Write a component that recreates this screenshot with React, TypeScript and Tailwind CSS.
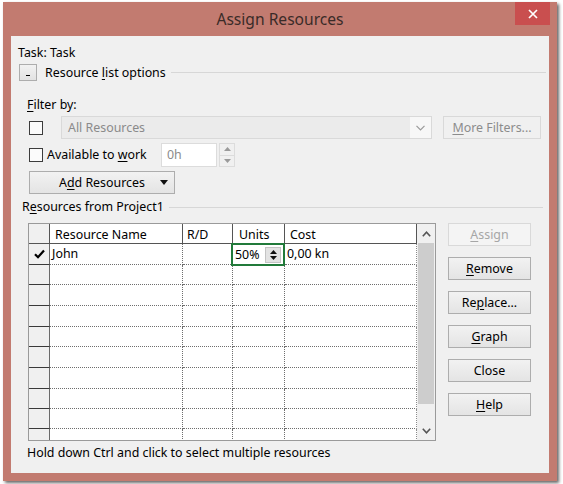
import React from 'react';

const U = ({ children }: { children: React.ReactNode }) => (
  <span className="underline underline-offset-[2px] decoration-[1px]">{children}</span>
);

function Btn({ children, disabled, className = '' }: { children: React.ReactNode; disabled?: boolean; className?: string }) {
  return (
    <div
      className={
        'h-[23px] w-[83px] flex items-center justify-center border ' +
        (disabled
          ? 'border-[#d9d9d9] bg-[#f4f4f4] text-[#a6a6a6] '
          : 'border-[#adadad] bg-linear-to-b from-[#f2f2f2] to-[#e4e4e4] text-black ') +
        className
      }
    >
      {children}
    </div>
  );
}

function Check() {
  return (
    <svg width="11" height="10" viewBox="0 0 11 10">
      <path d="M1 5.2 L4 8.2 L10 1.5" fill="none" stroke="#000" strokeWidth="2.2" />
    </svg>
  );
}

const rowHeights = ['h-[21px]', 'h-[20px]', 'h-[21px]', 'h-[21px]', 'h-[20px]', 'h-[21px]', 'h-[21px]', 'h-[20px]', 'h-[20px]', 'h-[20px]'];

function DataRow({ h, first }: { h: string; first?: boolean }) {
  return (
    <div className={'flex shrink-0 ' + h}>
      <div className="w-[21px] shrink-0 bg-[#f0f0f0] border-r border-r-[#6a6a6a] border-b border-b-[#3a3a3a] flex items-center justify-center">
        {first && <Check />}
      </div>
      <div className="w-[133px] shrink-0 bg-white border-r border-dotted border-r-[#6e6e6e] border-b border-b-[#6e6e6e] flex items-center pl-[2px]">
        {first && 'John'}
      </div>
      <div className="w-[50px] shrink-0 bg-white border-r border-dotted border-r-[#6e6e6e] border-b border-b-[#6e6e6e]" />
      <div className="w-[52px] shrink-0 bg-white border-r border-dotted border-r-[#6e6e6e] border-b border-b-[#6e6e6e] relative">
        {first && (
          <div className="absolute -left-[2px] -top-[1px] w-[54px] h-[23px] border-2 border-[#217a3a] bg-white flex items-center pl-[2px] z-10">
            <span>50%</span>
            <div className="ml-auto mr-[2px] w-[16px] h-[16px] bg-[#e3e3e3] border border-[#c4c4c4] flex flex-col items-center justify-center gap-[2px]">
              <svg width="7" height="4" viewBox="0 0 7 4"><path d="M0 4 L3.5 0 L7 4Z" fill="#111" /></svg>
              <svg width="7" height="4" viewBox="0 0 7 4"><path d="M0 0 L3.5 4 L7 0Z" fill="#111" /></svg>
            </div>
          </div>
        )}
      </div>
      <div className="w-[132px] shrink-0 bg-white border-r border-r-[#8a8a8a] border-b border-dotted border-b-[#6e6e6e] flex items-center pl-[2px]">
        {first && '0,00 kn'}
      </div>
    </div>
  );
}

export default function App() {
  return (
    <div className="w-[563px] h-[484px] bg-white overflow-hidden font-['Noto_Sans','Open_Sans',sans-serif] text-[12.4px] text-black leading-[16px]">
      <div className="pt-[2px] pl-[3px]">
        <div className="w-[554px] h-[479px] bg-[#c27b70] shadow-[2px_2px_3px_rgba(0,0,0,0.6)] flex flex-col">
          {/* title bar */}
          <div className="h-[34px] shrink-0 grid grid-cols-[1fr_auto_1fr]">
            <div />
            <div className="pt-[6px] text-[15.6px] leading-[22px] text-[#3a2b28]">Assign Resources</div>
            <div className="flex justify-end pr-[7px]">
              <div className="w-[35px] h-[23px] bg-[#c94f4f] flex items-center justify-center">
                <svg width="10" height="10" viewBox="0 0 10 10">
                  <path d="M1 1 L9 9 M9 1 L1 9" stroke="#fff" strokeWidth="1.7" />
                </svg>
              </div>
            </div>
          </div>
          {/* content */}
          <div className="mx-[8px] mb-[8px] flex-1 bg-[#f0f0f0] flex flex-col">
            <div className="mt-[9px] ml-[7px] h-[15px]">Task: Task</div>
            <div className="mt-[4px] h-[17px] flex items-center">
              <div className="ml-[8px] w-[18px] h-[17px] border border-[#adadad] bg-linear-to-b from-[#f2f2f2] to-[#e2e2e2] flex items-end justify-center pb-[2px]">
                <div className="w-[4px] h-[1px] bg-black mb-[2px]" />
              </div>
              <div className="ml-[8px]">
                Resource <U>l</U>ist options
              </div>
              <div className="flex-1 ml-[5px] mr-[3px] h-px bg-[#d7d7d7]" />
            </div>
            <div className="mt-[16px] ml-[16px] h-[16px]">
              <U>F</U>ilter by:
            </div>
            <div className="mt-[3px] h-[23px] flex items-center">
              <div className="ml-[18px] w-[14px] h-[14px] border border-[#3c3c3c] bg-[#fbfbfb]" />
              <div className="ml-[18px] w-[371px] h-[23px] border border-[#d9d9d9] bg-[#ebebeb] flex items-center">
                <div className="flex-1 pl-[6px] text-[#8a8a8a]">All Resources</div>
                <div className="w-[21px] h-full bg-[#f7f7f7] flex items-center justify-center">
                  <svg width="9" height="6" viewBox="0 0 9 6">
                    <path d="M0.5 0.8 L4.5 5 L8.5 0.8" fill="none" stroke="#9a9a9a" strokeWidth="1.2" />
                  </svg>
                </div>
              </div>
              <div className="ml-[11px] w-[98px] h-[23px] border border-[#d9d9d9] bg-[#f0f0f0] text-[#8c8c8c] flex items-center justify-center">
                <span>
                  <U>M</U>ore Filters...
                </span>
              </div>
            </div>
            <div className="mt-[4px] h-[24px] flex items-center">
              <div className="ml-[18px] w-[14px] h-[14px] border border-[#3c3c3c] bg-[#fbfbfb] shrink-0" />
              <div className="ml-[4px] w-[114px] shrink-0">
                Available to <U>w</U>ork
              </div>
              <div className="w-[56px] h-[24px] border border-[#dcdcdc] bg-white text-[#8b8b8b] flex items-center pl-[5px]">0h</div>
              <div className="ml-[2px] w-[16px] h-[24px] border border-[#dcdcdc] bg-[#f0f0f0] flex flex-col">
                <div className="flex-1 flex items-center justify-center border-b border-[#dcdcdc]">
                  <svg width="7" height="4" viewBox="0 0 7 4"><path d="M0 4 L3.5 0 L7 4Z" fill="#9a9a9a" /></svg>
                </div>
                <div className="flex-1 flex items-center justify-center">
                  <svg width="7" height="4" viewBox="0 0 7 4"><path d="M0 0 L3.5 4 L7 0Z" fill="#9a9a9a" /></svg>
                </div>
              </div>
            </div>
            <div className="mt-[4px] ml-[18px] w-[146px] h-[23px] border border-[#adadad] bg-linear-to-b from-[#f2f2f2] to-[#e4e4e4] flex items-center">
              <span className="ml-[29px]">
                A<U>d</U>d Resources
              </span>
              <svg className="ml-auto mr-[6px]" width="8" height="5" viewBox="0 0 8 5">
                <path d="M0 0 L4 5 L8 0Z" fill="#111" />
              </svg>
            </div>
            <div className="mt-[5px] h-[16px] flex items-center">
              <div className="ml-[11px]">
                R<U>e</U>sources from Project1
              </div>
              <div className="flex-1 ml-[5px] mr-[6px] h-px bg-[#d7d7d7]" />
            </div>
            <div className="mt-[8px] flex">
              {/* grid */}
              <div className="ml-[17px] w-[408px] h-[218px] border border-[#9a9a9a] flex overflow-hidden">
                <div className="w-[388px] flex flex-col overflow-hidden">
                  <div className="flex h-[20px] shrink-0 bg-white">
                    <div className="w-[21px] shrink-0 bg-[#f0f0f0] border-r border-b border-[#555]" />
                    <div className="w-[133px] shrink-0 border-r border-b border-[#555] flex items-center pl-[5px] pt-[3px]">Resource Name</div>
                    <div className="w-[50px] shrink-0 border-r border-b border-[#555] flex items-center pl-[4px] pt-[3px]">R/D</div>
                    <div className="w-[52px] shrink-0 border-r border-b border-[#555] flex items-center pl-[6px] pt-[3px]">Units</div>
                    <div className="w-[132px] shrink-0 border-r border-b border-[#555] flex items-center pl-[5px] pt-[3px]">Cost</div>
                  </div>
                  {rowHeights.map((h, i) => (
                    <DataRow key={i} h={h} first={i === 0} />
                  ))}
                </div>
                <div className="flex-1 bg-[#f0f0f0] flex flex-col">
                  <div className="h-[19px] shrink-0 flex items-center justify-center">
                    <svg width="9" height="6" viewBox="0 0 9 6">
                      <path d="M0.8 5.2 L4.5 1.2 L8.2 5.2" fill="none" stroke="#555" strokeWidth="1.6" />
                    </svg>
                  </div>
                  <div className="mx-[1px] h-[161px] shrink-0 bg-[#cdcdcd]" />
                  <div className="flex-1 flex items-end justify-center pb-[6px]">
                    <svg width="9" height="6" viewBox="0 0 9 6">
                      <path d="M0.8 0.8 L4.5 4.8 L8.2 0.8" fill="none" stroke="#555" strokeWidth="1.6" />
                    </svg>
                  </div>
                </div>
              </div>
              {/* buttons */}
              <div className="ml-[12px] flex flex-col gap-[11px]">
                <Btn disabled>
                  <span>
                    <U>A</U>ssign
                  </span>
                </Btn>
                <Btn>
                  <span>
                    <U>R</U>emove
                  </span>
                </Btn>
                <Btn>
                  <span>
                    Re<U>p</U>lace...
                  </span>
                </Btn>
                <Btn>
                  <span>
                    <U>G</U>raph
                  </span>
                </Btn>
                <Btn>Close</Btn>
                <Btn>
                  <span>
                    <U>H</U>elp
                  </span>
                </Btn>
              </div>
            </div>
            <div className="mt-[4px] ml-[16px] h-[16px]">Hold down Ctrl and click to select multiple resources</div>
          </div>
        </div>
      </div>
    </div>
  );
}
